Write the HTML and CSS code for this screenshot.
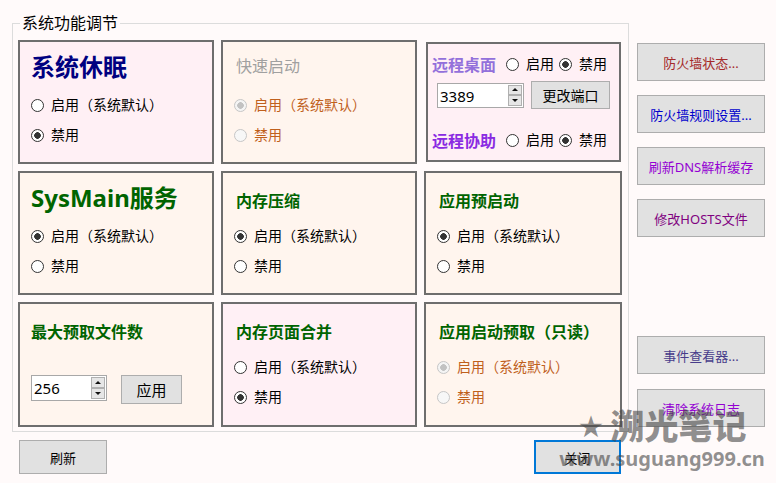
FILE: index.html
```html
<!DOCTYPE html>
<html lang="zh-CN">
  <head>
    <meta charset="UTF-8" />
    <title>系统功能调节</title>
    <link rel="stylesheet" href="styles.css">
  </head>
  <body>
    <div class="window">
      <div class="main">
        <fieldset class="group">
          <legend>系统功能调节</legend>
          <div class="grid">
            <div class="card pink">
              <div class="title big navy">系统休眠</div>
              <label class="opt"><input type="radio" name="sleep" />启用（系统默认）</label>
              <label class="opt"><input type="radio" name="sleep" checked />禁用</label>
            </div>

            <div class="card peach">
              <div class="title shift gray">快速启动</div>
              <label class="opt off"><input type="radio" name="fast" checked disabled />启用（系统默认）</label>
              <label class="opt off"><input type="radio" name="fast" disabled />禁用</label>
            </div>

            <div class="card pink remote">
              <div class="line first">
                <span class="rtitle violet">远程桌面</span>
                <label class="inline"><input type="radio" name="rdp" />启用</label>
                <label class="inline"><input type="radio" name="rdp" checked />禁用</label>
              </div>
              <div class="line port">
                <div class="spin wide">
                  <span class="val">3389</span>
                  <span class="arrows"><span class="up"></span><span class="down"></span></span>
                </div>
                <button class="btn port-btn">更改端口</button>
              </div>
              <div class="line last">
                <span class="rtitle blueviolet">远程协助</span>
                <label class="inline"><input type="radio" name="ra" />启用</label>
                <label class="inline"><input type="radio" name="ra" checked />禁用</label>
              </div>
            </div>

            <div class="card peach">
              <div class="title big">SysMain服务</div>
              <label class="opt"><input type="radio" name="sysmain" checked />启用（系统默认）</label>
              <label class="opt"><input type="radio" name="sysmain" />禁用</label>
            </div>

            <div class="card peach">
              <div class="title shift">内存压缩</div>
              <label class="opt"><input type="radio" name="mc" checked />启用（系统默认）</label>
              <label class="opt"><input type="radio" name="mc" />禁用</label>
            </div>

            <div class="card peach">
              <div class="title shift">应用预启动</div>
              <label class="opt"><input type="radio" name="al" checked />启用（系统默认）</label>
              <label class="opt"><input type="radio" name="al" />禁用</label>
            </div>

            <div class="card peach">
              <div class="title">最大预取文件数</div>
              <div class="prefetch">
                <div class="spin">
                  <span class="val">256</span>
                  <span class="arrows"><span class="up"></span><span class="down"></span></span>
                </div>
                <button class="btn apply-btn">应用</button>
              </div>
            </div>

            <div class="card pink">
              <div class="title shift">内存页面合并</div>
              <label class="opt"><input type="radio" name="pc" />启用（系统默认）</label>
              <label class="opt"><input type="radio" name="pc" checked />禁用</label>
            </div>

            <div class="card peach">
              <div class="title shift">应用启动预取（只读）</div>
              <label class="opt off"><input type="radio" name="ap" checked disabled />启用（系统默认）</label>
              <label class="opt off"><input type="radio" name="ap" disabled />禁用</label>
            </div>
          </div>
        </fieldset>

        <div class="side">
          <div class="side-top">
            <button class="btn c-brown">防火墙状态...</button>
            <button class="btn c-blue">防火墙规则设置...</button>
            <button class="btn c-violet">刷新DNS解析缓存</button>
            <button class="btn c-purple">修改HOSTS文件</button>
          </div>
          <div class="side-bottom">
            <button class="btn c-slate">事件查看器...</button>
            <button class="btn c-violet">清除系统日志</button>
          </div>
        </div>
      </div>

      <div class="bottom">
        <button class="btn">刷新</button>
        <button class="btn close">关闭</button>
      </div>

      <div class="watermark">
        <div class="wm-name"><span class="star">★</span>溯光笔记</div>
        <div class="wm-url">www.suguang999.cn</div>
      </div>
    </div>
  </body>
</html>
```

FILE: styles.css
```css
body {
  margin: 0;
  background: #fffafa;
  font-family: "Noto Sans", "Noto Sans CJK SC", sans-serif;
  font-size: 14px;
  color: #000;
}

.window {
  position: relative;
  width: 776px;
  height: 483px;
  overflow: hidden;
}

.main {
  display: flex;
  padding: 13px 0 0 12px;
}

/* group box */
.group {
  margin: 0;
  width: 617px;
  min-width: 0;
  box-sizing: border-box;
  border: 1px solid #dcdcdc;
  padding: 7px 6px 4px 5px;
}

.group legend {
  margin-left: 2px;
  padding: 0 2px;
  font-size: 16px;
  line-height: 20px;
}

.grid {
  display: grid;
  grid-template-columns: 196px 196px 198px;
  grid-template-rows: 124px 124px 125px;
  gap: 7px;
}

.card {
  border: 2px solid #6e6e6e;
  padding: 0 8px 0 11px;
}

.pink {
  background: #fff0f5;
}

.peach {
  background: #fff5ee;
}

.title {
  height: 48px;
  box-sizing: border-box;
  padding-top: 8px;
  display: flex;
  align-items: center;
  font-size: 16px;
  font-weight: bold;
  line-height: 20px;
  color: #006400;
  white-space: nowrap;
}

.title.big {
  padding-top: 2px;
  font-size: 24px;
  line-height: 30px;
}

.title.shift {
  padding-left: 2px;
}

.navy {
  color: #000080;
}

.title.gray {
  padding-top: 0;
  color: #a0a0a0;
  font-weight: normal;
}

/* radio buttons */
input[type="radio"] {
  appearance: none;
  width: 13px;
  height: 13px;
  margin: 0 7px 0 0;
  box-sizing: border-box;
  border: 1px solid #333;
  border-radius: 50%;
  background: #fff;
  flex: none;
}

input[type="radio"]:checked {
  background: radial-gradient(circle, #333 0, #333 3px, #fff 3.6px);
}

input[type="radio"]:disabled {
  border-color: #c6c6c6;
  background: #f7f7f7;
}

input[type="radio"]:disabled:checked {
  background: radial-gradient(circle, #c2c2c2 0, #c2c2c2 3px, #f4f4f4 3.6px);
}

.opt {
  display: flex;
  align-items: center;
  height: 30px;
  line-height: 20px;
}

.opt.off {
  color: #c0601c;
}

/* remote desktop card */
.remote {
  margin: 2px 1px 2px 2px;
  padding: 0 0 0 4px;
}

.line {
  display: flex;
  align-items: center;
  height: 30px;
}

.line.first {
  margin-top: 5px;
}

.line.port {
  margin-top: 1px;
  padding-left: 5px;
  gap: 7px;
}

.line.last {
  margin-top: 15px;
}

.rtitle {
  width: 64px;
  margin-right: 10px;
  font-size: 16px;
  font-weight: bold;
  white-space: nowrap;
}

.violet {
  color: #9370db;
}

.blueviolet {
  color: #8a2be2;
}

.inline {
  display: flex;
  align-items: center;
  margin-right: 5px;
  line-height: 20px;
}

/* numeric up-down */
.spin {
  display: flex;
  box-sizing: border-box;
  width: 76px;
  height: 26px;
  padding: 1px;
  border: 1px solid #a8a8a8;
  background: #fff;
}

.spin.wide {
  width: 87px;
  height: 25px;
}

.spin .val {
  flex: 1;
  padding-left: 1px;
  font-size: 15px;
  line-height: 22px;
}

.arrows {
  width: 14px;
  display: flex;
  flex-direction: column;
}

.arrows span {
  flex: 1;
  display: flex;
  align-items: center;
  justify-content: center;
  background: #e6e6e6;
  border: 1px solid #b0b0b0;
}

.arrows .up::after {
  content: "";
  border-left: 3px solid transparent;
  border-right: 3px solid transparent;
  border-bottom: 3px solid #111;
}

.arrows .down::after {
  content: "";
  border-left: 3px solid transparent;
  border-right: 3px solid transparent;
  border-top: 3px solid #111;
}

.prefetch {
  display: flex;
  align-items: flex-start;
  gap: 14px;
  margin-top: 23px;
}

/* buttons */
.btn {
  box-sizing: border-box;
  padding: 0;
  background: #e1e1e1;
  border: 1px solid #adadad;
  font-family: inherit;
  font-size: 13px;
  color: #000;
}

.port-btn {
  width: 79px;
  height: 28px;
  font-size: 14px;
}

.apply-btn {
  width: 61px;
  height: 29px;
  font-size: 15px;
}

.side {
  margin-left: 8px;
  width: 128px;
  box-sizing: border-box;
  padding: 30px 0 5px;
  display: flex;
  flex-direction: column;
}

.side .btn {
  height: 38px;
  width: 128px;
}

.side-top {
  display: flex;
  flex-direction: column;
  gap: 14px;
}

.side-bottom {
  margin-top: auto;
  display: flex;
  flex-direction: column;
  gap: 15px;
}

.c-brown {
  color: #a52a2a !important;
}

.c-blue {
  color: #0000cd !important;
}

.c-violet {
  color: #9400d3 !important;
}

.c-purple {
  color: #800080 !important;
}

.c-slate {
  color: #483d8b !important;
}

.bottom {
  display: flex;
  justify-content: space-between;
  width: 602px;
  margin-top: 8px;
  padding-left: 19px;
}

.bottom .btn {
  width: 88px;
  height: 34px;
}

.bottom .close {
  width: 87px;
  border: 2px solid #0078d7;
}

/* watermark */
.watermark {
  position: absolute;
  left: 556px;
  top: 405px;
  width: 212px;
  text-align: center;
  color: rgba(70, 70, 70, 0.6);
  font-weight: 900;
  pointer-events: none;
}

.wm-name {
  font-size: 34px;
  line-height: 42px;
  white-space: nowrap;
}

.star {
  font-family: "DejaVu Sans", sans-serif;
  font-size: 30px;
  margin-right: 6px;
  vertical-align: 2px;
}

.wm-url {
  font-family: "Noto Sans", "DejaVu Sans", sans-serif;
  font-weight: bold;
  font-size: 20px;
  line-height: 22px;
  white-space: nowrap;
}
```
